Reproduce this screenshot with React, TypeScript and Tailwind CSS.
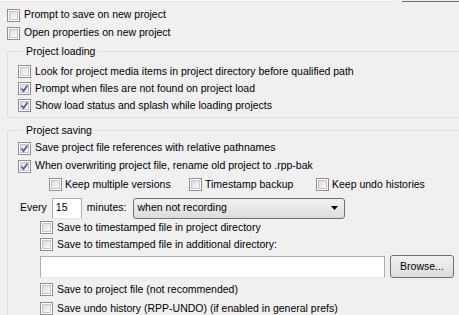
import React from "react";

const Check: React.FC<{ checked?: boolean }> = ({ checked }) => (
  <span className="relative w-[13px] h-[13px] shrink-0 border border-[#8f8f8f] bg-white p-[1px]">
    <span className="block w-full h-full border border-[#c6c6c6] bg-gradient-to-br from-[#dcdcdc] to-[#fbfbfb]" />
    {checked && (
      <svg className="absolute left-0 top-0" width="11" height="11" viewBox="0 0 11 11">
        <path d="M2.5 5.5 L4.5 8 L8.5 2.5" fill="none" stroke="#4a5fa3" strokeWidth="1.7" />
      </svg>
    )}
  </span>
);

const Row: React.FC<{ label: string; checked?: boolean; h?: string; pl?: string }> = ({
  label,
  checked,
  h = "h-[18px]",
  pl = "",
}) => (
  <div className={`flex items-center gap-[4px] ${h} ${pl}`}>
    <Check checked={checked} />
    <span className="whitespace-nowrap">{label}</span>
  </div>
);

const Inline: React.FC<{ label: string; className?: string }> = ({ label, className = "" }) => (
  <div className={`flex items-center gap-[3px] ${className}`}>
    <Check />
    <span className="whitespace-nowrap">{label}</span>
  </div>
);

const Group: React.FC<{ title: string; className?: string; children: React.ReactNode }> = ({
  title,
  className = "",
  children,
}) => (
  <fieldset className={`ml-[7px] w-[470px] border border-[#d5dfe5] rounded-[3px] pl-[10px] ${className}`}>
    <legend className="ml-[5px] px-[3px] leading-[14px]">{title}</legend>
    {children}
  </fieldset>
);

export default function App() {
  return (
    <div
      className="w-[459px] h-[315px] overflow-hidden bg-[#f0f0f0] text-[10.5px] text-black"
      style={{ fontFamily: '"Liberation Sans", Arial, sans-serif' }}
    >
      <div className="flex h-[2px]">
        <div className="w-[395px] bg-white border-b border-[#e3e3e3]" />
        <div className="ml-[7px] flex-1 bg-[#f0f0f0] border-b border-[#707070]" />
      </div>

      <div className="mt-[4px] pl-[7px]">
        <Row label="Prompt to save on new project" />
        <Row label="Open properties on new project" />
      </div>

      <Group title="Project loading" className="mt-[2px] pt-[5px] pb-[3px]">
        <Row h="h-[17px]" label="Look for project media items in project directory before qualified path" />
        <Row h="h-[17px]" checked label="Prompt when files are not found on project load" />
        <Row h="h-[17px]" checked label="Show load status and splash while loading projects" />
      </Group>

      <Group title="Project saving" className="mt-[5px] pt-[2px]">
        <Row checked label="Save project file references with relative pathnames" />
        <Row checked label="When overwriting project file, rename old project to .rpp-bak" />
        <div className="flex items-center h-[19px] pl-[31px]">
          <Inline label="Keep multiple versions" className="w-[140px]" />
          <Inline label="Timestamp backup" className="w-[127px]" />
          <Inline label="Keep undo histories" />
        </div>
        <div className="flex items-center mt-[3px] h-[22px] pl-[2px]">
          <span>Every</span>
          <div className="ml-[5px] w-[30px] h-[21px] bg-white border border-[#abadb3] border-b-[#e3e9ef] pl-[3px] flex items-center">
            15
          </div>
          <span className="ml-[5px]">minutes:</span>
          <div className="ml-[6px] w-[212px] h-[21px] rounded-[3px] border border-[#707070] bg-gradient-to-b from-[#f2f2f2] to-[#dcdcdc] flex items-center justify-between pl-[4px] pr-[6px]">
            <span>when not recording</span>
            <svg width="7" height="4" viewBox="0 0 7 4">
              <path d="M0 0 H7 L3.5 4 Z" fill="#000" />
            </svg>
          </div>
        </div>
        <div className="pl-[22px]">
          <Row h="h-[17px]" label="Save to timestamped file in project directory" />
          <Row h="h-[17px]" label="Save to timestamped file in additional directory:" />
          <div className="flex items-center h-[27px]">
            <div className="w-[345px] h-[22px] bg-white border border-[#abadb3] border-b-[#e3e9ef]" />
            <div className="ml-[5px] w-[64px] h-[23px] rounded-[3px] border border-[#707070] bg-gradient-to-b from-[#f2f2f2] to-[#dcdcdc] flex items-center justify-center">
              Browse...
            </div>
          </div>
          <Row h="h-[19px]" label="Save to project file (not recommended)" />
          <Row h="h-[19px]" label="Save undo history (RPP-UNDO) (if enabled in general prefs)" />
        </div>
      </Group>
    </div>
  );
}
